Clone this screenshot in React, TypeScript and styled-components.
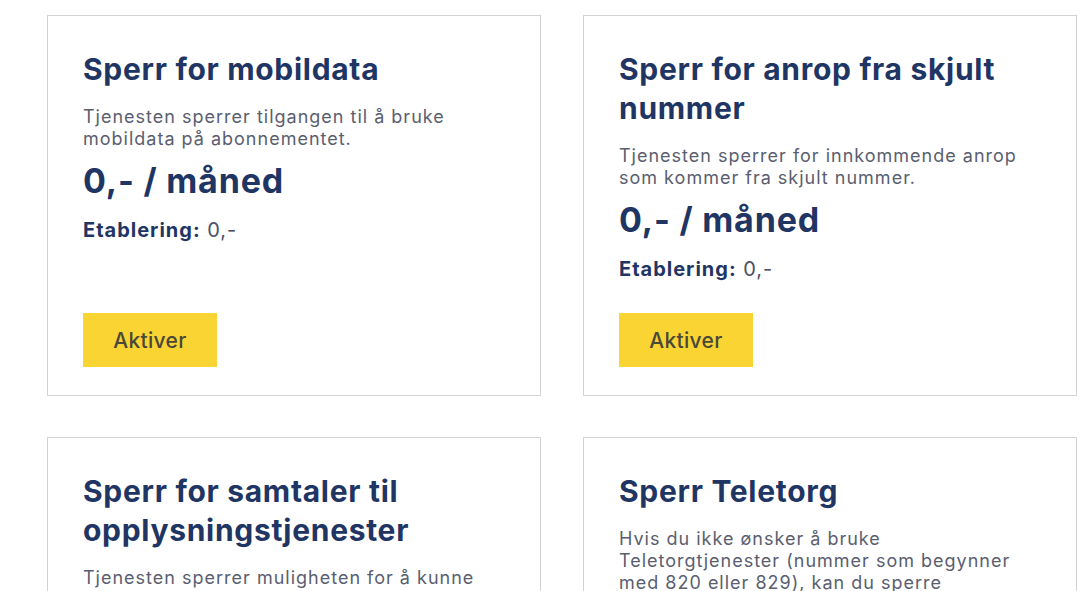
import React from "react";
import styled, { createGlobalStyle } from "styled-components";

const GlobalStyle = createGlobalStyle`
  html, body {
    margin: 0;
    padding: 0;
    background: #ffffff;
    overflow: hidden;
  }
  body {
    font-family: Inter, "Noto Sans", sans-serif;
  }
`;

const ServiceGrid = styled.div`
  display: grid;
  grid-template-columns: 494px 494px;
  column-gap: 42px;
  row-gap: 41px;
  padding: 15px 0 0 47px;
`;

const Card = styled.div`
  display: flex;
  flex-direction: column;
  align-items: flex-start;
  border: 1px solid #d2d2d2;
  padding: 34px 35px 28px;
  box-sizing: border-box;
`;

const Title = styled.h2`
  margin: 0 0 17px;
  font-size: 30px;
  line-height: 39px;
  font-weight: 700;
  letter-spacing: 0.7px;
  color: #1f3563;
`;

const Description = styled.p`
  margin: 0;
  max-width: 402px;
  font-size: 18px;
  line-height: 22px;
  font-weight: 400;
  letter-spacing: 1px;
  color: #5a5e70;
`;

const Price = styled.div`
  margin-top: 10px;
  font-size: 34px;
  line-height: 42px;
  font-weight: 700;
  letter-spacing: 0.8px;
  color: #1f3563;
`;

const Setup = styled.div`
  margin-top: 15px;
  font-size: 20px;
  line-height: 26px;
  letter-spacing: 1px;
  color: #4b5064;

  strong {
    font-weight: 700;
    color: #1f3563;
  }
`;

const ActivateButton = styled.button`
  margin-top: auto;
  width: 134px;
  height: 54px;
  border: none;
  background: #f9d433;
  color: #4a4838;
  font-family: inherit;
  font-size: 21px;
  font-weight: 500;
  letter-spacing: 0.3px;
  cursor: pointer;
`;

const ButtonSpacer = styled.div`
  height: 31px;
  flex-shrink: 0;
`;

type Service = {
  title: string;
  description: string;
};

const services: Service[] = [
  {
    title: "Sperr for mobildata",
    description: "Tjenesten sperrer tilgangen til å bruke mobildata på abonnementet.",
  },
  {
    title: "Sperr for anrop fra skjult nummer",
    description: "Tjenesten sperrer for innkommende anrop som kommer fra skjult nummer.",
  },
  {
    title: "Sperr for samtaler til opplysningstjenester",
    description:
      "Tjenesten sperrer muligheten for å kunne benytte opplysningstjenester.",
  },
  {
    title: "Sperr Teletorg",
    description:
      "Hvis du ikke ønsker å bruke Teletorgtjenester (nummer som begynner med 820 eller 829), kan du sperre tilgangen til disse tjenestene.",
  },
];

const ServiceCard: React.FC<{ service: Service }> = ({ service }) => (
  <Card>
    <Title>{service.title}</Title>
    <Description>{service.description}</Description>
    <Price>0,- / måned</Price>
    <Setup>
      <strong>Etablering:</strong> 0,-
    </Setup>
    <ButtonSpacer />
    <ActivateButton>Aktiver</ActivateButton>
  </Card>
);

const App: React.FC = () => {
  return (
    <>
      <GlobalStyle />
      <ServiceGrid>
        {services.map((s) => (
          <ServiceCard key={s.title} service={s} />
        ))}
      </ServiceGrid>
    </>
  );
};

export default App;
